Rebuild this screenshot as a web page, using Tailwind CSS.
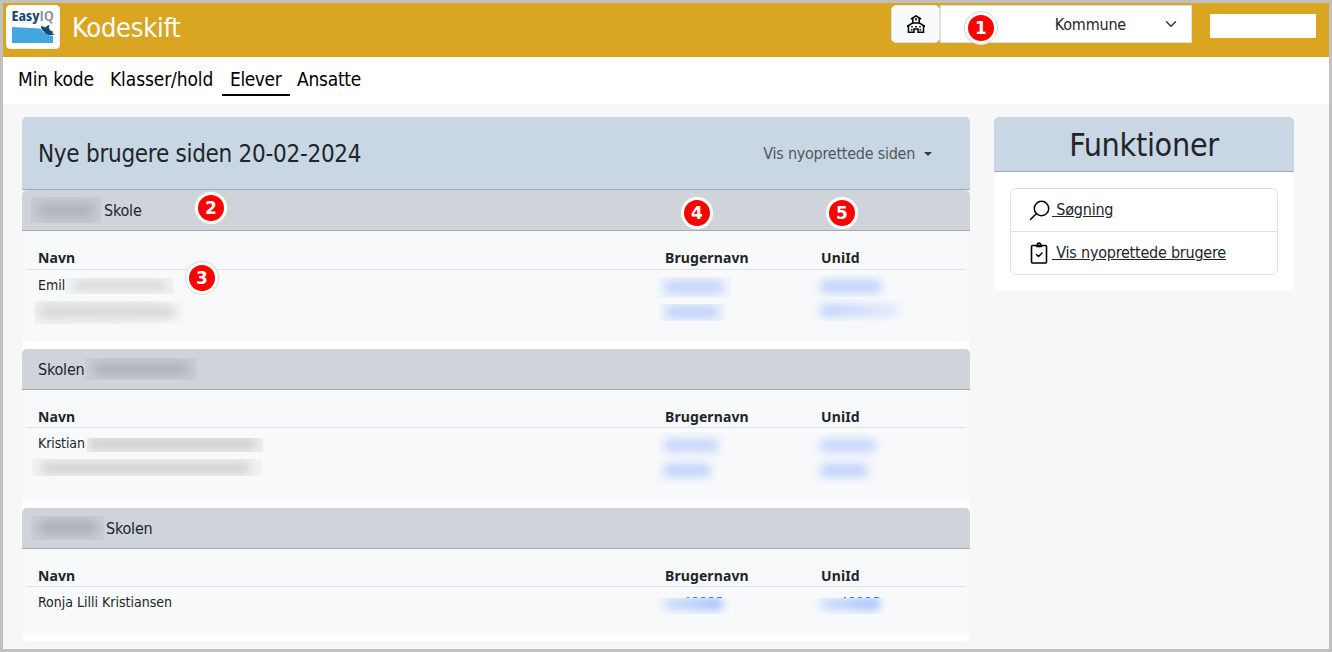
<!DOCTYPE html>
<html lang="da">
<head>
    <meta charset="UTF-8">
    <meta name="viewport" content="width=device-width, initial-scale=1.0">
    <title>Kodeskift</title>
    <script src="https://cdn.jsdelivr.net/npm/@tailwindcss/browser@4"></script>
    <style>
        body {
            font-family: Tahoma, 'DejaVu Sans Condensed', 'DejaVu Sans', sans-serif;
            font-stretch: condensed;
        }
        .table-font {
            font-family: 'Noto Sans', sans-serif;
            font-stretch: normal;
        }
        .marker-font {
            font-family: 'DejaVu Sans', sans-serif;
            font-stretch: normal;
        }
    </style>
</head>
<body class="text-[#212529]">
    <div class="relative w-[1332px] h-[652px] border-3 border-[#c0c0c0] bg-[#f7f7f7] overflow-hidden">
        <!-- Top bar -->
        <header class="flex h-[54px] bg-[#daa520] pl-[3px] pt-[2px]">
            <div class="w-[54px] h-[44px] bg-white rounded border border-gray-100 shrink-0">
                <svg width="52" height="42" viewBox="0 0 52 42">
                    <text x="4.500" y="14.500" font-family="Open Sans" font-size="13.500" font-weight="700" fill="#154a75" textLength="28" lengthAdjust="spacingAndGlyphs">Easy</text>
                    <text x="32.500" y="14.500" font-family="Open Sans" font-size="13.500" font-weight="600" fill="#8d8f92" textLength="14.500" lengthAdjust="spacingAndGlyphs">IQ</text>
                    <path d="M5 21L33 22.500C37 27 40 29.500 46 30V37H5Z" fill="#43a6df"/>
                    <path d="M34 20c1.500 0 3 .5 4.500 1.500 1-1.500 2.500-2.500 4-2.500-.8 2-.5 4 .8 5.500l3.500 1.500-2 1 3 1.500c-4 1.500-9.500.5-11-3-1.800-1-3-3-2.800-5.500z" fill="#154a75"/>
                </svg>
            </div>
            <h1 class="text-white text-[27px] leading-[46px] tracking-[-0.25px] ml-3 w-[819px]">Kodeskift</h1>
            <div class="flex h-[38px]">
                <button class="w-[49px] h-[38px] bg-[#f8f9fa] border border-[#dee2e6] rounded-[5px] flex items-center justify-center">
                    <svg width="20" height="20" viewBox="0 0 20 20" fill="none" stroke="#000" stroke-width="1.500">
                        <path d="M5 5L10 1.800 15 5M6.800 4V9.500M13.200 4V9.500M10 4V6.500M1 12.500L6.500 9H13.500L19 12.500M2.500 12V18.300H8V15H12V18.300H17.500V12M1 12.500H3M17 12.500H19"/>
                        <path d="M5.200 12.800H6.800M9.200 12.800H10.800M13.200 12.800H14.800M5 15.800H6.500M13.500 15.800H15"/>
                    </svg>
                </button>
                <div class="w-[252px] bg-white border border-[#dee2e6] flex items-center justify-end pr-[14px]">
                    <span class="text-[16px] tracking-[-0.2px] mr-[39px] pt-px">Kommune</span>
                    <svg width="12" height="12" viewBox="0 0 16 16" fill="none" stroke="#343a40" stroke-width="2" stroke-linecap="round" stroke-linejoin="round"><path d="M2 5l6 6 6-6"/></svg>
                </div>
            </div>
            <div class="w-[106px] h-6 bg-white ml-[18px] mt-[9px]"></div>
        </header>

        <!-- Menu -->
        <nav class="flex h-[47px] bg-white pl-[7px] text-black text-[19px] leading-[45px] tracking-[-0.1px]">
            <a class="w-[92px] pl-2">Min kode</a>
            <a class="w-[120px] pl-2">Klasser/hold</a>
            <a class="w-[68px] h-[39px] pl-2 border-b-2 border-black tracking-[-0.4px]">Elever</a>
            <a class="pl-2 ml-[-1px] tracking-[-0.25px]">Ansatte</a>
        </nav>

        <main class="flex items-start pt-[13px] pl-[19px] gap-6">
            <div class="w-[948px] bg-white rounded-[6px]">
                <div class="h-[73px] bg-[#c9d7e4] border-b border-[#a1afbc] rounded-t-[5px] flex items-center justify-between pl-4 pr-[38px]">
                    <h2 class="text-[24px] tracking-[-0.28px] pt-[2px]">Nye brugere siden 20-02-2024</h2>
                    <div class="flex items-center text-[16px] tracking-[-0.25px] text-[#51565b] pt-px">Vis nyoprettede siden
                        <span class="ml-[9px] border-x-4 border-x-transparent border-t-4 border-t-[#343a40]"></span>
                    </div>
                </div>

                <!-- School 1 -->
                <section class="mb-2">
                    <div class="h-[41px] bg-[#ced4da] border-b border-[#a5aaae] rounded-t-[5px] flex items-center pl-[9px] text-[16px] tracking-[-0.2px]">
                        <div class="w-[70px] h-[26px] mr-[3px] bg-[#c8cdd4] overflow-hidden"><div class="w-[56px] h-[13px] mt-[7px] ml-[7px] bg-[#abafb5] blur-[6px]"></div></div>
                        <span class="pt-px">Skole</span>
                    </div>
                    <div class="h-[110px] bg-[#f8f9fb] px-1">
                        <div class="table-font h-[39px] flex items-end pb-[1px] border-b border-[#dee2e6] text-[14px] font-bold leading-[20px] tracking-[0.1px]">
                            <span class="w-[627px] pl-3">Navn</span><span class="w-[157px] pl-3">Brugernavn</span><span class="pl-[11px]">UniId</span>
                        </div>
                        <div class="relative h-[60px] pl-3 pt-[5px] text-[14px] leading-[20px]">Emil
                            <div class="absolute left-[40px] top-[8px] w-[108px] h-[16px] bg-[#f1f2f3] overflow-hidden"><div class="w-[92px] h-[9px] m-[3px_8px] bg-[#d5d7d8] blur-[5px]"></div></div>
                            <div class="absolute left-[8px] top-[31px] w-[155px] h-[23px] overflow-hidden bg-linear-to-r from-[#f3f4f5] to-[#f8f9fb]"><div class="w-[136px] h-[13px] mt-[4px] ml-[5px] bg-[#d0d3d4] blur-[6px]"></div></div>
                            <div class="absolute left-[631px] top-[7px] w-[74px] h-[21px] bg-[#f3f6fb] overflow-hidden"><div class="w-[58px] h-[12px] m-[4px_8px] bg-[#bfd3fb] blur-[5px]"></div></div>
                            <div class="absolute left-[633px] top-[34px] w-[67px] h-[17px] bg-[#f3f6fb] overflow-hidden"><div class="w-[52px] h-[12px] m-[2px_7px] bg-[#bdd1fb] blur-[5px]"></div></div>
                            <div class="absolute left-[786px] top-[5px] w-[80px] h-[22px] overflow-hidden"><div class="w-[60px] h-[13px] m-[5px_9px] bg-[#bfd3fb] blur-[5px]"></div></div>
                            <div class="absolute left-[786px] top-[28px] w-[96px] h-[23px] overflow-hidden"><div class="w-[78px] h-[13px] m-[6px_9px] bg-linear-to-r from-[#bdd1fb] to-[#e3ebfa] blur-[5px]"></div></div>
                        </div>
                    </div>
                </section>

                <!-- School 2 -->
                <section class="mb-2">
                    <div class="h-[41px] bg-[#ced4da] border-b border-[#a5aaae] rounded-t-[5px] flex items-center pl-4 text-[16px] tracking-[-0.2px]">
                        <span class="pt-px">Skolen</span>
                        <div class="w-[112px] h-[22px] bg-[#cacfd5] overflow-hidden"><div class="w-[96px] h-[12px] m-[5px_8px] bg-[#a9aeb5] blur-[6px]"></div></div>
                    </div>
                    <div class="h-[110px] bg-[#f8f9fb] px-1">
                        <div class="table-font h-[38px] flex items-end border-b border-[#dee2e6] text-[14px] font-bold leading-[20px] tracking-[0.1px]">
                            <span class="w-[627px] pl-3">Navn</span><span class="w-[157px] pl-3">Brugernavn</span><span class="pl-[11px]">UniId</span>
                        </div>
                        <div class="relative h-[60px] pl-3 pt-[5px] text-[14px] leading-[20px] tracking-[-0.1px]">Kristian
                            <div class="absolute left-[61px] top-[10px] w-[176px] h-[14px] bg-[#eceded] overflow-hidden"><div class="w-[165px] h-[11px] ml-[3px] bg-[#cdcfd1] blur-[5px]"></div></div>
                            <div class="absolute left-[6px] top-[31px] w-[230px] h-[17px] bg-[#f1f2f3] overflow-hidden"><div class="w-[208px] h-[12px] m-[3px_10px] bg-[#d0d3d4] blur-[5px]"></div></div>
                            <div class="absolute left-[628px] top-[4px] w-[74px] h-[53px] overflow-hidden"><div class="w-[54px] h-[13px] m-[7px_10px] bg-[#c5d6fb] blur-[5px]"></div><div class="w-[46px] h-[13px] mt-[12px] ml-[10px] bg-[#bfd2fb] blur-[5px]"></div></div>
                            <div class="absolute left-[785px] top-[4px] w-[71px] h-[53px] overflow-hidden"><div class="w-[54px] h-[13px] m-[7px_10px] bg-[#c3d6fb] blur-[5px]"></div><div class="w-[46px] h-[13px] mt-[12px] ml-[10px] bg-[#bfd2fb] blur-[5px]"></div></div>
                        </div>
                    </div>
                </section>

                <!-- School 3 -->
                <section class="mb-2">
                    <div class="h-[41px] bg-[#ced4da] border-b border-[#a5aaae] rounded-t-[5px] flex items-center pl-[9px] text-[16px] tracking-[-0.2px]">
                        <div class="w-[74px] h-[24px] mr-px bg-[#cacfd5] overflow-hidden"><div class="w-[58px] h-[13px] mt-[5px] ml-[8px] bg-[#a7acb4] blur-[6px]"></div></div>
                        <span class="pt-px">Skolen</span>
                    </div>
                    <div class="h-[84px] bg-[#f8f9fb] px-1">
                        <div class="table-font h-[38px] flex items-end border-b border-[#dee2e6] text-[14px] font-bold leading-[20px] tracking-[0.1px]">
                            <span class="w-[627px] pl-3">Navn</span><span class="w-[157px] pl-3">Brugernavn</span><span class="pl-[11px]">UniId</span>
                        </div>
                        <div class="relative h-[40px] pl-3 pt-[5px] text-[14px] leading-[20px]">Ronja Lilli Kristiansen
                            <div class="absolute left-[630px] top-[11px] w-[74px] h-[16px] overflow-hidden"><div class="w-[58px] h-[12px] ml-[8px] bg-linear-to-r from-[#cfddfa] to-[#9bbbfb] blur-[5px]"></div></div>
                            <div class="absolute left-[787px] top-[11px] w-[74px] h-[16px] overflow-hidden"><div class="w-[58px] h-[12px] ml-[8px] bg-linear-to-r from-[#cfddfa] to-[#9bbbfb] blur-[5px]"></div></div>
                            <div class="absolute left-[661px] top-[10px] flex gap-[4px]"><i class="w-[2px] h-px bg-[#3b82f6]"></i><i class="w-[4px] h-px bg-[#3b82f6]"></i><i class="w-[4px] h-px bg-[#3b82f6]"></i><i class="w-[4px] h-px bg-[#3b82f6]"></i><i class="w-[5px] h-px bg-[#3b82f6]"></i></div>
                            <div class="absolute left-[818px] top-[10px] flex gap-[4px]"><i class="w-[2px] h-px bg-[#3b82f6]"></i><i class="w-[4px] h-px bg-[#3b82f6]"></i><i class="w-[4px] h-px bg-[#3b82f6]"></i><i class="w-[4px] h-px bg-[#3b82f6]"></i><i class="w-[5px] h-px bg-[#3b82f6]"></i></div>
                        </div>
                    </div>
                </section>
            </div>

            <!-- Functions -->
            <aside class="w-[300px] h-[174px] bg-white rounded-[6px]">
                <h2 class="h-[55px] bg-[#c9d7e4] border-b border-[#a1afbc] rounded-t-[5px] text-center text-[32px] leading-[57px] tracking-[-0.3px]">Funktioner</h2>
                <div class="m-4 h-[87px] border border-[#dee2e6] rounded-[6px] text-[16px] tracking-[-0.23px]">
                    <a class="h-[43px] flex items-center pl-[18px] border-b border-[#dee2e6]">
                        <svg class="mr-[2px]" width="21" height="21" viewBox="0 0 21 21" fill="none" stroke="#000" stroke-width="1.500" stroke-linecap="round"><circle cx="12.500" cy="8.500" r="7.200"/><path d="M7.500 13.500L1.500 19.500"/></svg>
                        <span class="underline whitespace-pre"> Søgning</span>
                    </a>
                    <a class="h-[42px] flex items-center pl-[18px]">
                        <svg class="mr-[2px]" width="21" height="22" viewBox="0 0 21 22" fill="none" stroke="#000" stroke-width="1.600" stroke-linejoin="round" stroke-linecap="round"><rect x="2.500" y="3.500" width="15" height="17.500" rx="1"/><path d="M7.500 4.500H12.500"/><circle cx="10" cy="2.800" r="1.700"/><path d="M7.500 12.500L9.500 14.500 13 11" stroke-width="1.500"/></svg>
                        <span class="underline whitespace-pre"> Vis nyoprettede brugere</span>
                    </a>
                </div>
            </aside>
        </main>

        <!-- Numbered markers -->
        <div class="marker-font text-white text-[17px] font-bold leading-[26px] text-center">
            <div class="absolute left-[961px] top-[8px] w-[34px] h-[34px] rounded-full border border-[#d5d5d5] bg-white p-[3px]"><div class="w-[26px] h-[26px] rounded-full bg-[#ff0000]">1</div></div>
            <div class="absolute left-[191px] top-[188px] w-[34px] h-[34px] rounded-full border border-[#d5d5d5] bg-white p-[3px]"><div class="w-[26px] h-[26px] rounded-full bg-[#ff0000]">2</div></div>
            <div class="absolute left-[182px] top-[258px] w-[34px] h-[34px] rounded-full border border-[#d5d5d5] bg-white p-[3px]"><div class="w-[26px] h-[26px] rounded-full bg-[#ff0000]">3</div></div>
            <div class="absolute left-[677px] top-[193px] w-[34px] h-[34px] rounded-full border border-[#d5d5d5] bg-white p-[3px]"><div class="w-[26px] h-[26px] rounded-full bg-[#ff0000]">4</div></div>
            <div class="absolute left-[822px] top-[193px] w-[34px] h-[34px] rounded-full border border-[#d5d5d5] bg-white p-[3px]"><div class="w-[26px] h-[26px] rounded-full bg-[#ff0000]">5</div></div>
        </div>
    </div>
</body>
</html>
